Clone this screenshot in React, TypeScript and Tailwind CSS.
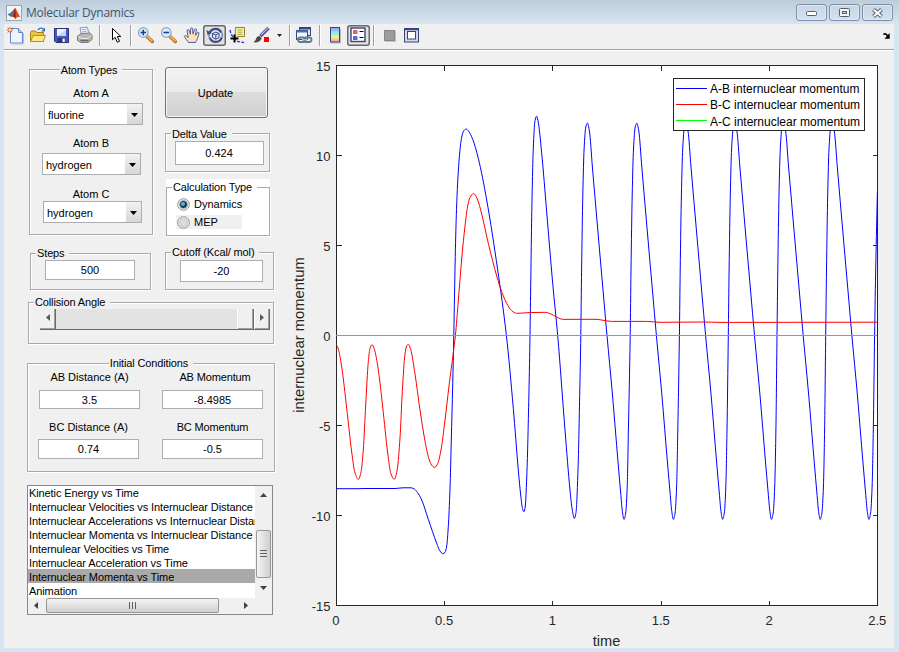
import type { ReactNode } from "react";
import clsx from "clsx";

type Point = [number, number];

// ---------- plot data (in figure pixels) ----------

const blueHead: Point[] = [
  [336.5, 488.7], [358, 488.7], [365, 488.5], [395, 488.5], [403, 487.8], [411, 487.8],
  [414, 488.8], [417.5, 492.5], [421.7, 500], [428.3, 519.3], [436.7, 543.3], [440, 551],
  [442.7, 553.7], [445, 552.3], [446.7, 546], [448.3, 526.7], [450, 489], [451.3, 440],
  [452.7, 385], [453.8, 335.5], [454.5, 296], [455.7, 236.7], [457, 196.7], [458.3, 171.7],
  [459.7, 153], [461.7, 137], [463.7, 131], [466, 129], [468.3, 130.8], [472.7, 139.3],
  [478.3, 158.3], [486.7, 200], [497.7, 270], [506.4, 335.5], [513.3, 408.3], [518.3, 470],
  [520.7, 495], [522.7, 509.5], [524, 511.7], [525.3, 506], [527, 470], [529, 390],
  [530, 335.5], [530.8, 280], [531.7, 216.7], [533.3, 148], [535, 120.7], [536.5, 116.2],
  [538, 120.7], [541.7, 153.3], [546.7, 212], [552.7, 283.3], [557.7, 335.5], [565, 430],
  [570, 490], [572.3, 510], [574.4, 518.5], [576, 512.5], [578, 470], [579.8, 390],
];

// offsets from a rising zero crossing
const cycle: Point[] = [
  [0, 335.5], [0.8, 270], [2, 195], [3.3, 149], [5, 127], [6.6, 123.2], [8.6, 131],
  [11.6, 167], [17.6, 237], [22.3, 291], [26.2, 335.5], [31.6, 394], [37.3, 463],
  [39.9, 493], [41.6, 511.5], [43.2, 519.4], [44.9, 513], [46.4, 487], [47.6, 430],
];

const crossings = [580.8, 630.2, 679.4, 728.3, 777, 825.7];

const bluePoints: Point[] = [
  ...blueHead,
  ...crossings.flatMap((x0) => cycle.map(([dx, y]): Point => [x0 + dx, y])),
  [874.6, 335.5],
  [875.8, 264],
  [877.4, 192],
];

const redPoints: Point[] = [
  [336.5, 345], [338.3, 349], [341.7, 367], [346.7, 408], [351.7, 452], [355, 473],
  [358.4, 479.5], [361, 472], [363.3, 450], [365.7, 405], [368.3, 361.7], [370, 348.3],
  [372, 344.7], [374.3, 349], [378.3, 370], [382.7, 407], [387.7, 453], [391, 474],
  [394.4, 479.3], [397.3, 469], [400, 438], [402.3, 391.7], [405, 354], [406.7, 346],
  [408.3, 344.3], [410.7, 349.5], [415, 374], [420, 410], [425, 441], [429.3, 460],
  [432.3, 466], [434.8, 467.4], [437.7, 463.5], [441, 450], [445, 420], [449, 386],
  [453.3, 353], [455.4, 335.5], [458.3, 301], [461.7, 259], [465, 226], [467.5, 207],
  [470, 197.5], [473.6, 193.5], [477.3, 199], [481.7, 214], [488.3, 243.3], [496.7, 276],
  [501.7, 291.7], [506.7, 303.3], [511.7, 310.7], [516.7, 313.3], [530, 312.6], [545, 312.3],
  [551.7, 314.3], [556.7, 317.2], [563.3, 319.4], [585, 319.3], [596, 319.3], [602, 320.1],
  [611.7, 321.4], [646.7, 321.4], [660, 322.3], [703, 322], [720, 322.4], [877.5, 322.2],
];

// monotone cubic through the points, so the extrema never overshoot
function smoothPath(pts: Point[]) {
  const n = pts.length;
  const slope = pts.slice(1).map(([x, y], i) => (y - pts[i][1]) / (x - pts[i][0]));
  const m = pts.map((_, i) => {
    if (i === 0) return slope[0];
    if (i === n - 1) return slope[n - 2];
    const a = slope[i - 1];
    const b = slope[i];
    return a * b <= 0 ? 0 : (2 * a * b) / (a + b);
  });
  let d = `M${pts[0][0]} ${pts[0][1]}`;
  for (let i = 1; i < n; i++) {
    const [x0, y0] = pts[i - 1];
    const [x1, y1] = pts[i];
    const h = (x1 - x0) / 3;
    d += `C${x0 + h} ${y0 + m[i - 1] * h} ${x1 - h} ${y1 - m[i] * h} ${x1} ${y1}`;
  }
  return d;
}

const yTicks = [15, 10, 5, 0, -5, -10, -15];
const xTicks = [0, 0.5, 1, 1.5, 2, 2.5];
const legendItems = [
  { label: "A-B internuclear momentum", color: "#0000ff", y: 88.5, base: 93 },
  { label: "B-C internuclear momentum", color: "#ff0000", y: 104.5, base: 109 },
  { label: "A-C internuclear momentum", color: "#00ff00", y: 120.5, base: 126 },
];

function Plot() {
  return (
    <svg width="609" height="597" viewBox="285 51 609 597" fontFamily="'Liberation Sans', Arial, sans-serif">
      <rect x="336.5" y="65.5" width="541" height="540" fill="#fff" />
      <g stroke="#262626" fill="none" shapeRendering="crispEdges">
        <rect x="336.5" y="65.5" width="541" height="540" />
        {yTicks.map((v) => (
          <path key={v} d={`M336.5 ${335.5 - 18 * v}h5M872.5 ${335.5 - 18 * v}h5`} />
        ))}
        {xTicks.map((v) => (
          <path key={v} d={`M${Math.floor(336.5 + 216.4 * v) + 0.5} 65.5v5M${Math.floor(336.5 + 216.4 * v) + 0.5} 600.5v5`} />
        ))}
      </g>
      <path d={smoothPath(bluePoints)} stroke="#0000ff" fill="none" />
      <path d={smoothPath(redPoints)} stroke="#ff0000" fill="none" />
      <path d="M336 335.5h541" stroke="#00ff00" shapeRendering="crispEdges" />

      <g fontSize="13" fill="#262626">
        {yTicks.map((v) => (
          <text key={v} x="330.5" y={340.5 - 18 * v} textAnchor="end">
            {v}
          </text>
        ))}
        {xTicks.map((v) => (
          <text key={v} x={335.8 + 216.6 * v} y="625" textAnchor="middle">
            {v}
          </text>
        ))}
      </g>
      <text x="606.5" y="646" fontSize="14.6" fill="#262626" textAnchor="middle">
        time
      </text>
      <text transform="translate(304 335) rotate(-90)" fontSize="14.8" fill="#262626" textAnchor="middle">
        internuclear momentum
      </text>

      <rect x="673.5" y="78.5" width="191" height="52" fill="#fff" stroke="#262626" shapeRendering="crispEdges" />
      {legendItems.map((item) => (
        <g key={item.label}>
          <path d={`M676 ${item.y}h31`} stroke={item.color} shapeRendering="crispEdges" />
          <text x="710" y={item.base} fontSize="12" fill="#000">
            {item.label}
          </text>
        </g>
      ))}
    </svg>
  );
}

// ---------- toolbar ----------

function Icon({ children }: { children: ReactNode }) {
  return (
    <svg width="19" height="19" viewBox="0 0 19 19" fill="none" className="shrink-0">
      {children}
    </svg>
  );
}

function ToolButton({ children, pressed }: { children: ReactNode; pressed?: boolean }) {
  return (
    <button
      className={clsx(
        "flex h-[21px] w-[23px] shrink-0 items-center justify-center rounded-[3px]",
        pressed && "bg-[#e2e2e2] inset-ring-[1.5px] inset-ring-[#686868]"
      )}
    >
      {children}
    </button>
  );
}

function Separator({ wide }: { wide?: boolean }) {
  return (
    <div className={clsx("h-[21px] shrink-0 pl-[3px]", wide ? "w-2" : "w-[7px]")}>
      <div className="h-full w-[2px] border-r border-l border-r-white border-l-[#a0a0a0]" />
    </div>
  );
}

function Magnifier({ plus }: { plus?: boolean }) {
  return (
    <Icon>
      <path d="M11 10.5l5.3 5" stroke="#b06a1c" strokeWidth="3.4" strokeLinecap="round" />
      <path d="M11.2 10.3l4.8 4.6" stroke="#f5b455" strokeWidth="1.8" strokeLinecap="round" />
      <circle cx="7.3" cy="6.5" r="4.8" fill="#d4f0fb" stroke="#8da4c8" strokeWidth="1.2" />
      <path d={plus ? "M4.5 6.5h5.6M7.3 3.7v5.6" : "M4.5 6.5h5.6"} stroke="#1c3f8c" strokeWidth="1.6" />
    </Icon>
  );
}

function Toolbar() {
  return (
    <div className="flex h-[27px] shrink-0 items-start border-b border-white bg-[#f0f0f0]">
      <div className="flex h-[26px] w-full items-start border-b border-[#a0a0a0] pt-px">
        <ToolButton>
          <Icon>
            <path d="M4.5 2.5h8l4 4v10.5h-12z" fill="#eef5ff" stroke="#6484c4" />
            <path d="M12.5 2.5v4h4" fill="#b9cdf0" stroke="#6484c4" />
            <path d="M17.5 7v11h-12" stroke="#b4c4de" />
            <path d="M4 0.8v6.4M.8 4h6.4M1.7 1.7l4.6 4.6M6.3 1.7L1.7 6.3" stroke="#d9532c" />
            <circle cx="4" cy="4" r="1.4" fill="#ffd27a" />
          </Icon>
        </ToolButton>
        <ToolButton>
          <Icon>
            <path d="M1.5 15.5v-9l1-1.5h4l1.5 1.5h6.5v9z" fill="#e9c548" stroke="#a87c12" />
            <path d="M1.5 15.5l2.7-6h12.3l-2.3 6z" fill="#fdea7c" stroke="#b8901c" />
            <path d="M9 4c1.8-2.4 4-2.4 5.6-.6" stroke="#3c6ea8" strokeWidth="1.3" />
            <path d="M16 1.5v4h-4z" fill="#3c6ea8" />
          </Icon>
        </ToolButton>
        <ToolButton>
          <Icon>
            <path d="M2.5 2.5h14v14H4l-1.5-1.5z" fill="#4a58c4" stroke="#28307e" />
            <rect x="5" y="3" width="9" height="7" fill="#eef4ff" />
            <path d="M5 10l9-6v6z" fill="#c4d4f4" />
            <rect x="5.5" y="12" width="8" height="4.5" fill="#303478" />
            <rect x="10.5" y="12.5" width="2.3" height="3.5" fill="#f2f2f8" />
          </Icon>
        </ToolButton>
        <ToolButton>
          <Icon>
            <path d="M5 2l7-1 2.5 6.5-8 2z" fill="#f4f8ff" stroke="#8898b4" />
            <path d="M6.5 4l5-.8M7 6l5.5-1" stroke="#98acd0" />
            <path d="M2.5 10l4-2.5 8-.5 2.5 2v4.5L13 16.5H6l-3.5-2z" fill="#b8b8ba" stroke="#78787c" />
            <path d="M3 10.5l4 2h6l3.5-3" stroke="#ececec" />
            <path d="M5.5 14.5h8" stroke="#666" strokeWidth="1.5" />
            <path d="M13.5 12.5h2" stroke="#d9b62c" strokeWidth="1.5" />
          </Icon>
        </ToolButton>
        <Separator wide />
        <ToolButton>
          <Icon>
            <path d="M6.5 2.5v11.3l2.6-2.5 2.2 5 2.2-1-2.2-4.8h3.5z" fill="#fff" stroke="#000" />
          </Icon>
        </ToolButton>
        <Separator />
        <ToolButton>
          <Magnifier plus />
        </ToolButton>
        <ToolButton>
          <Magnifier />
        </ToolButton>
        <ToolButton>
          <Icon>
            <path
              d="M6.5 16.5c-.8-2-3.8-4.3-4.2-6 .2-1.2 1.5-1.2 2.2-.4l1.7 1.5L5 4.8c0-1.5 1.7-1.6 2.1-.3l1.2 3.7L8.5 3c.2-1.4 2-1.4 2.2 0l.3 5 1.5-4.500c.5-1.300 2.100-1 1.900.5l-.9 5.300 1.700-2.500c.9-1 2.200-.3 1.700 1-.9 2.800-1.500 6-3.400 8.700z"
              fill="#fbe0c0"
              stroke="#4a5f9c"
            />
          </Icon>
        </ToolButton>
        <ToolButton pressed>
          <Icon>
            <path d="M4.6 7a6.3 6.3 0 0 1 11.6-.5M16.7 11.5a6.3 6.3 0 0 1-11.9.4" stroke="#3b4c86" strokeWidth="2.2" />
            <path d="M16.6 6a6.5 6.5 0 0 1 .2 6M4.5 12.5a6.5 6.5 0 0 1-.2-5" stroke="#6b7aa8" strokeWidth="1.3" />
            <path d="M1.5 4l1 5 4.3-2z" fill="#3b4c86" />
            <path d="M7.5 7.5l3.3-1.3 3.2 1.3v4l-3.2 1.8-3.3-1.8z" fill="#dfe5f4" stroke="#3b4c86" />
            <path d="M7.5 7.5l3.3 1.5 3.2-1.5M10.8 9v4" stroke="#3b4c86" />
          </Icon>
        </ToolButton>
        <ToolButton>
          <Icon>
            <path d="M2 4c.6 3 1.5 5 3.5 8s5 4 10.5 4.5" stroke="#2424e8" strokeWidth="1.3" strokeDasharray="3 1.5" />
            <path d="M7.5 1.5h9v9h-7l-2.5 2z" fill="#f8f3a0" stroke="#8d8428" />
            <path d="M9.5 4h5M9.5 6.2h5M9.5 8.4h5" stroke="#aaa050" />
            <path d="M6.5 8.5v8M2.5 12.5h8" stroke="#000" strokeWidth="2" />
          </Icon>
        </ToolButton>
        <ToolButton>
          <Icon>
            <path d="M17.5 2L9.5 10" stroke="#3e4688" strokeWidth="3.2" />
            <path d="M17.3 1.8L10 9" stroke="#b4b8e8" strokeWidth="1.2" />
            <path d="M3 16c2-.8 2-2.5 3-4.5 1.2-1.8 3.8-1.2 4 .6.2 2.7-3.5 4.4-7 3.9z" fill="#50483f" stroke="#2a2420" strokeWidth=".6" />
            <rect x="13" y="11" width="5" height="5" fill="#f00" />
          </Icon>
        </ToolButton>
        <div className="flex h-[21px] w-3.5 shrink-0 items-center justify-center">
          <svg width="5" height="3" viewBox="0 0 5 3">
            <path d="M0 0h5L2.5 3z" fill="#222" />
          </svg>
        </div>
        <Separator />
        <ToolButton>
          <Icon>
            <rect x="4.5" y="1.5" width="11" height="8" fill="#dfe9fa" stroke="#33477e" />
            <path d="M4.5 2.5h11" stroke="#33477e" strokeWidth="2" />
            <rect x="1.5" y="4.5" width="11" height="9" fill="#f2f6fd" stroke="#33477e" />
            <path d="M1.5 5.5h11" stroke="#5570b0" strokeWidth="2" />
            <rect x="3" y="11.5" width="7.5" height="4.5" rx="2.2" stroke="#5f7896" strokeWidth="1.8" />
            <rect x="9" y="11.5" width="7.5" height="4.5" rx="2.2" stroke="#5f7896" strokeWidth="1.8" />
            <path d="M7 13.7h5.5" stroke="#b4c8dc" strokeWidth="1.2" />
          </Icon>
        </ToolButton>
        <Separator wide />
        <ToolButton>
          <Icon>
            <defs>
              <linearGradient id="colorbar" x1="0" y1="0" x2="0" y2="1">
                <stop offset="0" stopColor="#8e9cf0" />
                <stop offset=".35" stopColor="#8ee4ee" />
                <stop offset=".65" stopColor="#f4f09a" />
                <stop offset="1" stopColor="#f3a08c" />
              </linearGradient>
            </defs>
            <path d="M5 17h9.5V3" stroke="#b8b8b8" />
            <rect x="4.5" y="1.5" width="9" height="14.5" fill="url(#colorbar)" stroke="#33477e" />
          </Icon>
        </ToolButton>
        <ToolButton pressed>
          <Icon>
            <rect x="2" y="2" width="14" height="13.5" fill="#fff" stroke="#33477e" strokeWidth="1.4" />
            <rect x="4" y="4" width="4.5" height="4" fill="#e86060" />
            <rect x="4" y="10" width="4.5" height="4" fill="#6060e0" />
            <path d="M10.5 5.5h4M10.5 11.5h4" stroke="#000" />
          </Icon>
        </ToolButton>
        <Separator />
        <ToolButton>
          <Icon>
            <path d="M6 15.5h10.5V5" stroke="#c4c4c4" />
            <rect x="5.5" y="4.5" width="10" height="10" fill="#9c9c9c" stroke="#868686" />
          </Icon>
        </ToolButton>
        <ToolButton>
          <Icon>
            <rect x="2.5" y="2.5" width="14" height="13.5" fill="#d5d8e0" stroke="#33477e" />
            <path d="M2.5 3.2h14" stroke="#33477e" strokeWidth="2" />
            <rect x="5.5" y="5.5" width="8" height="7.5" fill="#fff" stroke="#33477e" />
          </Icon>
        </ToolButton>
        <svg width="8" height="6" viewBox="0 0 8 6" className="mt-2 mr-[3px] ml-auto">
          <path d="M0.5 1.5C2 .2 3.2 1 4.6 3" stroke="#000" strokeWidth="1.6" fill="none" />
          <path d="M6.7 0v5.7H1.5z" fill="#000" />
        </svg>
      </div>
    </div>
  );
}

function WindowButton({ children }: { children: ReactNode }) {
  return (
    <button className="flex h-[17px] w-[31px] items-center justify-center rounded-[3px] border border-[#7f90ab] bg-linear-to-b from-[#c8d5e3] to-[#d4e1ef] inset-ring inset-ring-[#dfe9f3]">
      {children}
    </button>
  );
}

function TitleBar() {
  return (
    <div className="flex h-6 shrink-0 items-center bg-linear-to-b from-[#bfcddb] to-[#d7e4f2] pr-[6px] pl-[6px]">
      <svg width="16" height="16" viewBox="0 0 16 16" className="mt-px">
        <rect x=".5" y=".5" width="15" height="15" fill="#f3f3f3" stroke="#9aa4b4" />
        <path d="M1.5 9.5L5 7.5 9 3l-1.5 5.5L5.2 12z" fill="#3878b4" />
        <path d="M5.2 12L7 7.5 9 3c1 .5 2.8 5 5.5 9.5-2-1.5-3-1-5 1.5-.8-1.6-2.3-2.5-4.3-2z" fill="#d8501c" />
        <path d="M9 3c.7 2.5.8 6 .5 11-.8-1.6-1.5-2.2-2.5-2.2z" fill="#8c2416" />
      </svg>
      <h1 className="mt-[2px] ml-1 font-['Open_Sans',sans-serif] text-[12px] leading-none tracking-[-0.25px] whitespace-nowrap text-[#42556b]">
        Molecular Dynamics
      </h1>
      <div className="ml-auto flex gap-[2px] pt-px">
        <WindowButton>
          <svg width="12" height="6" viewBox="0 0 12 6" className="mt-[3px]">
            <rect x=".5" y=".5" width="10" height="4" rx="1" fill="#fff" stroke="#54606f" />
          </svg>
        </WindowButton>
        <WindowButton>
          <svg width="11" height="9" viewBox="0 0 11 9">
            <rect x=".5" y=".5" width="10" height="8" rx="1" fill="#f4f4f4" stroke="#54606f" />
            <rect x="3.5" y="3.5" width="4" height="2" fill="#c8d5e3" stroke="#54606f" />
          </svg>
        </WindowButton>
        <WindowButton>
          <svg width="13" height="10" viewBox="0 0 13 10">
            <path d="M2.5 1.5l8 7M10.5 1.5l-8 7" stroke="#54606f" strokeWidth="4" />
            <path d="M2.8 1.7l7.4 6.6M10.2 1.7L2.8 8.3" stroke="#fff" strokeWidth="2" />
          </svg>
        </WindowButton>
      </div>
    </div>
  );
}

// ---------- form controls ----------

type GroupProps = { title: string; className?: string; legendClass?: string; children: ReactNode };

function Group({ title, className, legendClass = "ml-[5px] bg-[#f0f0f0]", children }: GroupProps) {
  return (
    <fieldset
      className={clsx(
        "min-w-0 shrink-0 border border-[#a9a9a9] shadow-[1px_1px_0_#fff,inset_1px_1px_0_#fff]",
        className
      )}
    >
      <legend className={clsx("h-3.5 pr-[5px] pl-px leading-[14px] tracking-[-0.13px] whitespace-nowrap", legendClass)}>
        {title}
      </legend>
      {children}
    </fieldset>
  );
}

function Edit({ value, className }: { value: string; className?: string }) {
  return (
    <div className={clsx("flex shrink-0 items-center justify-center border border-[#abadb3] bg-white", className)}>
      {value}
    </div>
  );
}

function Popup({ value, className }: { value: string; className?: string }) {
  return (
    <div className={clsx("flex h-[22px] w-[99px] items-center border border-[#abadb3] bg-white pl-[3px]", className)}>
      <span className="mt-[3px]">{value}</span>
      <div className="ml-auto flex h-full w-[15px] items-center justify-center bg-linear-to-b from-[#f2f2f2] to-[#d6d6d6]">
        <svg width="7" height="4" viewBox="0 0 7 4" className="mt-px">
          <path d="M0 0h7L3.5 4z" fill="#000" />
        </svg>
      </div>
    </div>
  );
}

function Radio({ checked }: { checked?: boolean }) {
  return (
    <svg width="13" height="13" viewBox="0 0 13 13" className="shrink-0">
      <circle cx="6.5" cy="6.5" r="5.8" fill="#f4f4f4" stroke="#8e8f8f" />
      <circle cx="6.5" cy="6.5" r="4" fill={checked ? "#15364f" : "#dcdcdc"} stroke={checked ? "#b4c4d0" : "#bcbcbc"} strokeWidth=".8" />
      {checked && <circle cx="6" cy="6" r="2" fill="#4fb4dc" />}
    </svg>
  );
}

function CollisionSlider() {
  return (
    <div className="ml-[11px] flex h-[21px] w-[230px] border-b border-[#696969] bg-[#e3e3e3]">
      <div className="flex w-4 items-center justify-center border-r border-[#696969] bg-[#f0f0f0] shadow-[inset_-1px_-1px_0_#a0a0a0]">
        <svg width="4" height="7" viewBox="0 0 4 7" className="-mt-[3px]">
          <path d="M4 0v7L0 3.5z" fill="#5a5a5a" />
        </svg>
      </div>
      <div className="flex-1" />
      <div className="w-[17px] border-r border-l border-r-[#696969] border-l-white bg-[#f0f0f0] shadow-[inset_-1px_-1px_0_#a0a0a0]" />
      <div className="flex w-4 items-center justify-center border-r border-l border-r-[#696969] border-l-white bg-[#f0f0f0] shadow-[inset_-1px_-1px_0_#a0a0a0]">
        <svg width="4" height="7" viewBox="0 0 4 7" className="-mt-[3px]">
          <path d="M0 0v7l4-3.5z" fill="#5a5a5a" />
        </svg>
      </div>
    </div>
  );
}

const plots = [
  "Kinetic Energy vs Time",
  "Internuclear Velocities vs Internuclear Distance",
  "Internuclear Accelerations vs Internuclear Distance",
  "Internuclear Momenta vs Internuclear Distance",
  "Internulear Velocities vs Time",
  "Internuclear Acceleration vs Time",
  "Internuclear Momenta vs Time",
  "Animation",
];

function PlotList() {
  return (
    <div className="mt-[13px] ml-[23px] flex h-[130px] w-[246px] shrink-0 flex-col border border-[#828790] bg-[#f0f0f0]">
      <div className="flex h-[112px]">
        <ul className="w-[227px] overflow-hidden bg-white">
          {plots.map((name) => (
            <li
              key={name}
              className={clsx(
                "h-3.5 pl-px leading-[16px] tracking-[-0.1px] whitespace-nowrap first:-mt-px",
                name === "Internuclear Momenta vs Time" && "bg-[#a9a9a9]"
              )}
            >
              {name}
            </li>
          ))}
        </ul>
        <div className="flex w-[17px] flex-col items-center">
          <svg width="7" height="4" viewBox="0 0 7 4" className="mt-[7px]">
            <path d="M3.5 0L7 4H0z" fill="#404040" />
          </svg>
          <div className="mt-[33px] flex h-12 w-[15px] items-center justify-center rounded-[2px] border border-[#979797] bg-linear-to-r from-[#f4f4f4] to-[#cfcfcf]">
            <svg width="7" height="8" viewBox="0 0 7 8" shapeRendering="crispEdges">
              <path d="M0 .5h7M0 3.5h7M0 6.5h7" stroke="#606060" />
            </svg>
          </div>
          <svg width="7" height="4" viewBox="0 0 7 4" className="mt-[8px]">
            <path d="M3.5 4L7 0H0z" fill="#404040" />
          </svg>
        </div>
      </div>
      <div className="flex h-4 w-[227px] items-center">
        <svg width="4" height="7" viewBox="0 0 4 7" className="-mt-px ml-[6px]">
          <path d="M4 0v7L0 3.5z" fill="#404040" />
        </svg>
        <div className="-mt-px ml-2 flex h-[15px] w-[173px] items-center justify-center rounded-[2px] border border-[#979797] bg-linear-to-b from-[#f4f4f4] to-[#cfcfcf]">
          <svg width="8" height="7" viewBox="0 0 8 7" shapeRendering="crispEdges">
            <path d="M.5 0v7M3.5 0v7M6.5 0v7" stroke="#606060" />
          </svg>
        </div>
        <svg width="4" height="7" viewBox="0 0 4 7" className="-mt-px mr-[7px] ml-auto">
          <path d="M0 0v7l4-3.5z" fill="#404040" />
        </svg>
      </div>
    </div>
  );
}

function Controls() {
  return (
    <div className="flex w-[281px] shrink-0 flex-col">
      <div className="flex h-[239px] shrink-0 pl-[25px]">
        <div className="w-[124px] pt-[11px]">
          <Group title="Atom Types" className="h-[173px]" legendClass="mx-auto pt-px bg-[#f0f0f0]">
            <p className="mt-[10px] mb-[3px] text-center leading-[14px]">Atom A</p>
            <Popup value="fluorine" className="ml-[14px]" />
            <p className="mt-[11px] mb-[3px] text-center leading-[14px]">Atom B</p>
            <Popup value="hydrogen" className="ml-3" />
            <p className="mt-[12px] text-center leading-[14px]">Atom C</p>
            <Popup value="hydrogen" className="ml-[13px]" />
          </Group>
          <Group title="Steps" className="mt-[11px] ml-px h-[44px] w-[121px]">
            <Edit value="500" className="ml-[14px] h-5 w-[90px]" />
          </Group>
        </div>

        <div className="ml-3 w-[109px] pt-4">
          <button className="h-[51px] w-[103px] rounded-[3px] border border-[#707070] bg-[linear-gradient(#f2f2f2,#ebebeb_48%,#dddddd_50%,#cfcfcf)] pt-[2px] pr-[2px] inset-ring inset-ring-[#f6f6f6]">
            Update
          </button>
          <Group title="Delta Value" className="mt-2 h-[46px] w-[105px]" legendClass="ml-[5px] pt-px bg-[#f0f0f0]">
            <Edit value="0.424" className="mt-px ml-[9px] h-6 w-[89px] pr-px" />
          </Group>
          <div className="mt-[7px] ml-px h-[58px] w-[104px] bg-white pt-px pb-px">
            <Group title="Calculation Type" className="h-[56px]" legendClass="ml-[5px] bg-white">
              <div className="mt-[3px] ml-[10px] flex h-[14px] items-center gap-[5px]">
                <Radio checked />
                <span className="-ml-px">Dynamics</span>
              </div>
              <div className="mt-[4px] ml-[9px] flex h-[14px] w-[66px] items-center gap-[5px] bg-[#f0f0f0] pl-px">
                <Radio />
                <span className="-ml-px">MEP</span>
              </div>
            </Group>
          </div>
          <Group title="Cutoff (Kcal/ mol)" className="mt-2 h-[45px]">
            <Edit value="-20" className="mt-px ml-[14px] h-[22px] w-[83px]" />
          </Group>
        </div>
      </div>

      <Group title="Collision Angle" className="mt-[5px] ml-6 h-[49px] w-[246px]">
        <CollisionSlider />
      </Group>

      <Group title="Initial Conditions" className="mt-3 ml-[23px] h-[116px] w-[248px]" legendClass="mx-auto bg-[#f0f0f0]">
        <div className="flex gap-[22px] pl-[11px] text-center leading-[14px]">
          <div className="w-[101px]">AB Distance (A)</div>
          <div className="w-[106px] tracking-[-0.15px]">AB Momentum</div>
        </div>
        <div className="mt-[6px] flex gap-[22px] pl-[11px]">
          <Edit value="3.5" className="h-[19px] w-[101px] pt-[2px]" />
          <Edit value="-8.4985" className="h-[19px] w-[101px] pt-[2px]" />
        </div>
        <div className="mt-[11px] flex gap-[22px] pl-[10px] text-center leading-[14px]">
          <div className="w-[101px]">BC Distance (A)</div>
          <div className="w-[103px] tracking-[-0.15px]">BC Momentum</div>
        </div>
        <div className="mt-[5px] flex gap-[23px] pl-[10px]">
          <Edit value="0.74" className="h-5 w-[101px]" />
          <Edit value="-0.5" className="h-5 w-[101px]" />
        </div>
      </Group>

      <PlotList />
    </div>
  );
}

export default function App() {
  return (
    <div className="flex h-[652px] w-[899px] flex-col overflow-hidden bg-[#d7e4f2] font-['Liberation_Sans',Arial,sans-serif] text-[11px] text-black">
      <TitleBar />
      <main className="mr-[5px] mb-1 ml-1 flex flex-1 flex-col bg-[#f0f0f0]">
        <Toolbar />
        <div className="flex">
          <Controls />
          <Plot />
        </div>
      </main>
    </div>
  );
}
